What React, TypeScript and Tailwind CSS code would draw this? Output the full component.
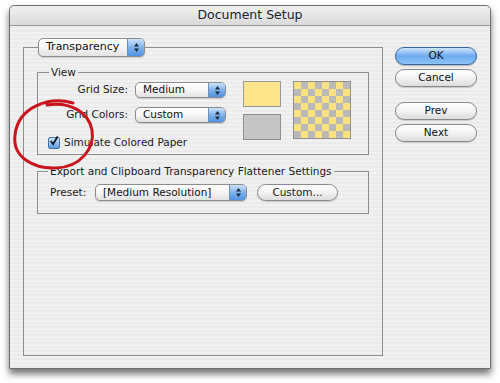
const font = "font-['Lucida_Grande','DejaVu_Sans',sans-serif]"

function Arrows() {
  return (
    <svg width="7" height="11" viewBox="0 0 7 11">
      <path d="M3.5 1 L6 4.5 L1 4.5 Z" fill="#1d2a3a" />
      <path d="M3.5 10 L6 6.5 L1 6.5 Z" fill="#1d2a3a" />
    </svg>
  )
}

function Popup({ label, className }: { label: string; className: string }) {
  return (
    <div
      className={`flex items-stretch overflow-hidden rounded-[5px] border border-[#8d8d8d] bg-gradient-to-b from-white via-[#f6f6f6] to-[#e2e2e2] shadow-[0_1px_1px_rgba(0,0,0,0.15)] ${className}`}
    >
      <span className="flex flex-1 items-center pl-[7px] text-[#111]">{label}</span>
      <span className="flex w-[17px] items-center justify-center border-l border-[#6d8fb8] bg-gradient-to-b from-[#cde3fa] via-[#7fb2ec] to-[#4e92e2]">
        <Arrows />
      </span>
    </div>
  )
}

function Button({ label, primary }: { label: string; primary?: boolean }) {
  return (
    <div
      className={
        primary
          ? 'flex h-[18px] items-center justify-center rounded-full border border-[#35659e] bg-gradient-to-b from-[#cfe5fb] via-[#6eaaf0] to-[#8ec4f8] text-[#111] shadow-[0_1px_1px_rgba(0,0,0,0.25)]'
          : 'flex h-[18px] items-center justify-center rounded-full border border-[#8a8a8a] bg-gradient-to-b from-white via-[#f3f3f3] to-[#dcdcdc] text-[#111] shadow-[0_1px_1px_rgba(0,0,0,0.15)]'
      }
    >
      {label}
    </div>
  )
}

function Checker() {
  const cells = []
  for (let r = 0; r < 8; r++) {
    for (let c = 0; c < 8; c++) {
      cells.push(
        <div
          key={r * 8 + c}
          className={(r + c) % 2 === 0 ? 'bg-[#fbe27e]' : 'bg-[#b9b9b9]'}
        />
      )
    }
  }
  return (
    <div className="grid h-[58px] w-[58px] grid-cols-8 grid-rows-8 border border-[#8f8f8f]">
      {cells}
    </div>
  )
}

export default function App() {
  return (
    <div
      className={`relative h-[383px] w-[500px] overflow-hidden bg-white pl-[9px] pt-[5px] text-[10.5px] text-[#1a1a1a] ${font}`}
    >
      {/* window */}
      <div className="flex h-[364px] w-[482px] flex-col rounded-t-[5px] border border-[#6f6f6f] bg-[repeating-linear-gradient(0deg,#ebebeb_0px,#ebebeb_2px,#f1f1f1_2px,#f1f1f1_4px)] shadow-[0_5px_7px_rgba(0,0,0,0.55)]">
        {/* title bar */}
        <div className="flex h-[20px] items-center justify-center rounded-t-[5px] border-b border-[#9c9c9c] bg-gradient-to-b from-[#f1f1f1] to-[#dadada] text-[12.5px] text-[#222]">
          Document Setup
        </div>

        <div className="flex pl-[13px]">
          {/* outer group */}
          <div className="mt-[21px] flex h-[309px] w-[360px] flex-col border border-[#8e8e8e]">
            <Popup label="Transparency" className="-mt-[10px] ml-[14px] h-[19px] w-[107px] bg-white text-[11px]" />

            {/* View */}
            <div className="ml-[13px] mt-[15px] flex h-[83px] w-[332px] flex-col border border-[#8e8e8e]">
              <span className="-mt-[8px] ml-[11px] self-start bg-[#eeeeee] px-[2px] leading-[14px]">
                View
              </span>
              <div className="mt-[3px] flex">
                <div className="flex w-[188px] flex-col">
                  <div className="flex h-[16px] items-center">
                    <span className="w-[90px] text-right">Grid Size:</span>
                    <Popup label="Medium" className="ml-[7px] h-[16px] w-[91px]" />
                  </div>
                  <div className="mt-[9px] flex h-[16px] items-center">
                    <span className="w-[90px] text-right">Grid Colors:</span>
                    <Popup label="Custom" className="ml-[7px] h-[16px] w-[91px]" />
                  </div>
                  <div className="ml-[10px] mt-[12px] flex items-center">
                    <span className="flex h-[12px] w-[12px] items-center justify-center rounded-[2px] border border-[#4a6f9c] bg-gradient-to-b from-[#cfe4fb] to-[#5c9be6]">
                      <svg width="11" height="12" viewBox="0 0 11 12" className="-mt-[3px]">
                        <path d="M2 6 L4.5 9.5 L9.5 1" stroke="#0d1622" strokeWidth="2" fill="none" />
                      </svg>
                    </span>
                    <span className="ml-[4px]">Simulate Colored Paper</span>
                  </div>
                </div>
                <div className="-mt-[1px] ml-[17px] flex flex-col">
                  <div className="h-[26px] w-[38px] border border-[#9a9a9a] bg-[#fde58c]" />
                  <div className="mt-[7px] h-[26px] w-[38px] border border-[#8f8f8f] bg-[#c6c6c6]" />
                </div>
                <div className="-mt-[1px] ml-[12px]">
                  <Checker />
                </div>
              </div>
            </div>

            {/* Export */}
            <div className="ml-[13px] mt-[16px] flex h-[43px] w-[332px] flex-col border border-[#8e8e8e]">
              <span className="-mt-[8px] ml-[10px] self-start bg-[#eeeeee] px-[2px] leading-[14px]">
                Export and Clipboard Transparency Flattener Settings
              </span>
              <div className="ml-[12px] mt-[6px] flex items-center">
                <span className="w-[45px]">Preset:</span>
                <Popup label="[Medium Resolution]" className="h-[17px] w-[152px]" />
                <div className="ml-[10px] flex h-[17px] w-[81px] items-center justify-center rounded-full border border-[#8a8a8a] bg-gradient-to-b from-white via-[#f3f3f3] to-[#dcdcdc] shadow-[0_1px_1px_rgba(0,0,0,0.15)]">
                  Custom...
                </div>
              </div>
            </div>
          </div>

          {/* buttons */}
          <div className="ml-[12px] mt-[21px] flex w-[82px] flex-col">
            <Button label="OK" primary />
            <div className="mt-[4px]">
              <Button label="Cancel" />
            </div>
            <div className="mt-[15px]">
              <Button label="Prev" />
            </div>
            <div className="mt-[4px]">
              <Button label="Next" />
            </div>
          </div>
        </div>
      </div>

      {/* red annotation circle */}
      <svg
        className="pointer-events-none absolute left-[9px] top-[95px]"
        width="92"
        height="80"
        viewBox="0 0 92 80"
      >
        <path
          d="M64 8 C40 1, 9 12, 6 40 C3 63, 26 74, 47 73 C72 72, 86 53, 83 35 C80 18, 62 6, 38 10"
          stroke="#c8141c"
          strokeWidth="3"
          fill="none"
          strokeLinecap="round"
        />
      </svg>
    </div>
  )
}
